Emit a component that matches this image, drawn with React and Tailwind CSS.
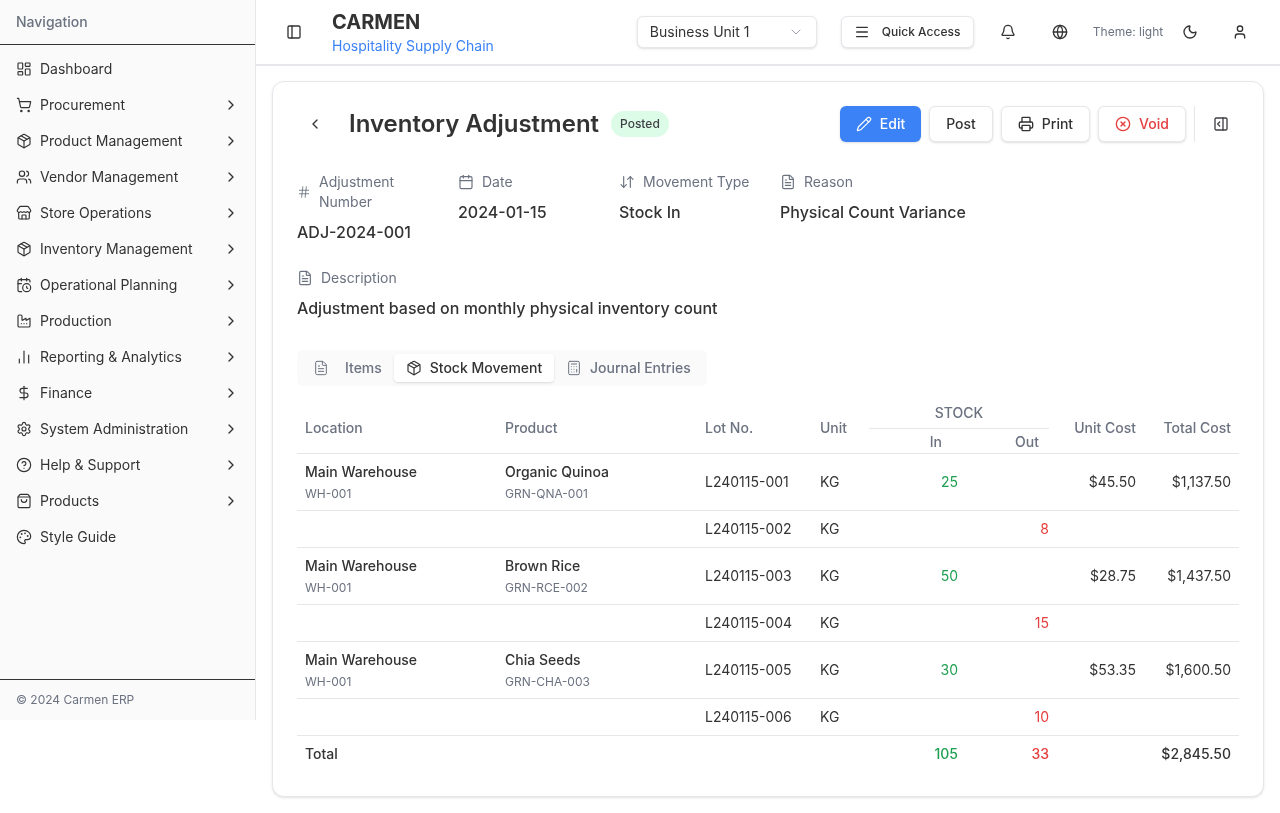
import React from "react";
import {
  LayoutDashboard, ShoppingCart, Package, Users, Store, CalendarClock, Factory, ChartNoAxesColumn, DollarSign, Settings,
  HelpCircle, ShoppingBag, Palette, ChevronRight, ChevronDown, ChevronLeft, PanelLeft, PanelRightOpen, Menu, Bell, Globe, Moon, User,
  Pencil, Printer, XCircle, Hash, Calendar, ArrowDownUp, FileText, Calculator,
} from "lucide-react";

const navItems = [
  { label: "Dashboard", icon: LayoutDashboard },
  { label: "Procurement", icon: ShoppingCart, sub: true },
  { label: "Product Management", icon: Package, sub: true },
  { label: "Vendor Management", icon: Users, sub: true },
  { label: "Store Operations", icon: Store, sub: true },
  { label: "Inventory Management", icon: Package, sub: true },
  { label: "Operational Planning", icon: CalendarClock, sub: true },
  { label: "Production", icon: Factory, sub: true },
  { label: "Reporting & Analytics", icon: ChartNoAxesColumn, sub: true },
  { label: "Finance", icon: DollarSign, sub: true },
  { label: "System Administration", icon: Settings, sub: true },
  { label: "Help & Support", icon: HelpCircle, sub: true },
  { label: "Products", icon: ShoppingBag, sub: true },
  { label: "Style Guide", icon: Palette },
];

const rows = [
  { loc: "Main Warehouse", code: "WH-001", product: "Organic Quinoa", sku: "GRN-QNA-001", lot: "L240115-001", stockIn: 25, unitCost: "$45.50", total: "$1,137.50" },
  { lot: "L240115-002", stockOut: 8 },
  { loc: "Main Warehouse", code: "WH-001", product: "Brown Rice", sku: "GRN-RCE-002", lot: "L240115-003", stockIn: 50, unitCost: "$28.75", total: "$1,437.50" },
  { lot: "L240115-004", stockOut: 15 },
  { loc: "Main Warehouse", code: "WH-001", product: "Chia Seeds", sku: "GRN-CHA-003", lot: "L240115-005", stockIn: 30, unitCost: "$53.35", total: "$1,600.50" },
  { lot: "L240115-006", stockOut: 10 },
];

function Sidebar() {
  return (
    <aside className="w-[256px] h-[720px] shrink-0 bg-[#fafafa] border-r border-[#e5e7eb] flex flex-col">
      <div className="h-[45px] px-4 flex items-center border-b border-[#333333] text-sm font-medium text-[#6b7280]">Navigation</div>
      <nav className="flex-1 px-2 pt-[6px]">
        {navItems.map((item) => (
          <div key={item.label} className="h-9 pl-2 pr-2 flex items-center gap-2 text-sm text-[#333333]">
            <item.icon className="w-4 h-4 shrink-0" strokeWidth={1.75} />
            <span className="flex-1">{item.label}</span>
            {item.sub && <ChevronRight className="w-4 h-4" strokeWidth={2} />}
          </div>
        ))}
      </nav>
      <div className="h-[41px] px-4 flex items-center border-t border-[#333333] text-xs text-[#6b7280]">© 2024 Carmen ERP</div>
    </aside>
  );
}

function Header() {
  return (
    <header className="h-[66px] bg-white border-b-2 border-[#e5e7eb] flex items-center pl-[30px] pr-[31px]">
      <PanelLeft className="w-4 h-4 text-[#333333]" strokeWidth={2} />
      <div className="ml-[30px] flex flex-col">
        <span className="text-xl leading-7 font-bold text-[#333333]">CARMEN</span>
        <span className="text-sm leading-5 text-[#3b82f6]">Hospitality Supply Chain</span>
      </div>
      <div className="ml-[143px] w-[180px] h-8 px-3 flex items-center justify-between bg-white border border-[#e5e7eb] rounded-md shadow-sm text-sm text-[#333333]">
        Business Unit 1
        <ChevronDown className="w-4 h-4 text-[#9ca3af]" strokeWidth={1.5} />
      </div>
      <div className="ml-6 w-[133px] h-8 pl-3 flex items-center gap-3 bg-white border border-[#e5e7eb] rounded-md shadow-sm text-xs font-medium text-[#333333]">
        <Menu className="w-4 h-4" strokeWidth={2} />
        Quick Access
      </div>
      <Bell className="ml-[26px] w-4 h-4 text-[#333333]" strokeWidth={2} />
      <Globe className="ml-[36px] w-4 h-4 text-[#333333]" strokeWidth={2} />
      <span className="ml-[25px] text-xs text-[#6b7280]">Theme: light</span>
      <Moon className="ml-[19px] w-4 h-4 text-[#333333]" strokeWidth={2} />
      <User className="ml-[34px] w-4 h-4 text-[#333333]" strokeWidth={2} />
    </header>
  );
}

function OutlineBtn({ children, className = "" }) {
  return (
    <button className={`h-9 flex items-center justify-center gap-2 bg-white border border-[#e5e7eb] rounded-md shadow-sm text-sm font-medium ${className}`}>
      {children}
    </button>
  );
}

function Field({ icon: Icon, label, value, className = "" }) {
  return (
    <div className={className}>
      <div className="flex items-center gap-2 text-sm leading-5 text-[#6b7280]">
        <Icon className="w-4 h-4 shrink-0" strokeWidth={1.75} />
        <span>{label}</span>
      </div>
      <div className="mt-[10px] text-base leading-5 font-medium text-[#333333]">{value}</div>
    </div>
  );
}

function StockTable() {
  return (
    <table className="mt-[15px] w-[942px] table-fixed border-collapse text-sm text-[#333333]">
      <colgroup>
        <col className="w-[200px]" />
        <col className="w-[200px]" />
        <col className="w-[115px]" />
        <col className="w-[57px]" />
        <col className="w-[90px]" />
        <col className="w-[90px]" />
        <col className="w-[95px]" />
        <col className="w-[95px]" />
      </colgroup>
      <thead className="text-[#6b7280] font-medium">
        <tr className="h-[27px]">
          <th rowSpan={2} className="px-2 pt-[2px] text-left font-medium">Location</th>
          <th rowSpan={2} className="px-2 pt-[2px] text-left font-medium">Product</th>
          <th rowSpan={2} className="px-2 pt-[2px] text-left font-medium">Lot No.</th>
          <th rowSpan={2} className="px-2 pt-[2px] text-left font-medium">Unit</th>
          <th colSpan={2} className="pb-[2px] border-b border-[#e5e7eb] font-medium text-center">STOCK</th>
          <th rowSpan={2} className="px-2 pt-[2px] text-right font-medium">Unit Cost</th>
          <th rowSpan={2} className="px-2 pt-[2px] text-right font-medium">Total Cost</th>
        </tr>
        <tr className="h-[25px] border-b border-[#e5e7eb]">
          <th className="pt-[3px] pr-[17px] text-right font-medium">In</th>
          <th className="pt-[3px] pr-[10px] text-right font-medium">Out</th>
        </tr>
      </thead>
      <tbody>
        {rows.map((r) => (
          <tr key={r.lot} className={`border-b border-[#e5e7eb] ${r.loc ? "h-[57px]" : "h-[37px]"}`}>
            <td className="px-2">
              {r.loc && (
                <>
                  <div className="font-medium leading-5">{r.loc}</div>
                  <div className="mt-1 text-xs leading-4 text-[#6b7280]">{r.code}</div>
                </>
              )}
            </td>
            <td className="px-2">
              {r.product && (
                <>
                  <div className="font-medium leading-5">{r.product}</div>
                  <div className="mt-1 text-xs leading-4 text-[#6b7280]">{r.sku}</div>
                </>
              )}
            </td>
            <td className="px-2">{r.lot}</td>
            <td className="px-2">KG</td>
            <td className="pr-px text-right text-[#1fa052]">{r.stockIn}</td>
            <td className="text-right text-[#e53e3e]">{r.stockOut}</td>
            <td className="px-2 text-right">{r.unitCost}</td>
            <td className="px-2 text-right">{r.total}</td>
          </tr>
        ))}
        <tr className="h-[37px] font-medium">
          <td className="px-2" colSpan={4}>Total</td>
          <td className="pr-px text-right text-[#1fa052]">105</td>
          <td className="text-right text-[#e53e3e]">33</td>
          <td></td>
          <td className="px-2 text-right">$2,845.50</td>
        </tr>
      </tbody>
    </table>
  );
}

export default function App() {
  return (
    <div className="flex min-h-[813px] antialiased will-change-transform" style={{ fontFamily: "Inter, sans-serif" }}>
      <Sidebar />
      <div className="flex-1 min-w-0">
        <Header />
        <main className="px-4 pt-[15px] pb-4">
          <section className="h-[716px] bg-white border border-[#e5e7eb] rounded-xl shadow-sm pl-6 pr-6 pt-6">
            <div className="flex items-center h-9">
              <ChevronLeft className="ml-[10px] w-4 h-4 text-[#333333]" strokeWidth={2} />
              <h1 className="ml-[26px] text-2xl font-semibold text-[#333333]">Inventory Adjustment</h1>
              <span className="ml-3 h-[26px] px-[9px] flex items-center rounded-full bg-[#dcfce7] text-xs font-medium text-[#3f3f46]">Posted</span>
              <div className="ml-auto flex items-center gap-2">
                <button className="w-[81px] h-9 flex items-center justify-center gap-2 rounded-md bg-[#3b82f6] text-sm font-medium text-white shadow-sm">
                  <Pencil className="w-4 h-4" strokeWidth={1.75} />
                  Edit
                </button>
                <OutlineBtn className="w-16 text-[#333333]">Post</OutlineBtn>
                <OutlineBtn className="w-[89px] text-[#333333]"><Printer className="w-4 h-4" strokeWidth={2} />Print</OutlineBtn>
                <OutlineBtn className="w-[88px] text-[#e53e3e]"><XCircle className="w-4 h-4" strokeWidth={2} />Void</OutlineBtn>
                <div className="w-px h-9 bg-[#e5e7eb]"></div>
                <PanelRightOpen className="ml-[10px] mr-[10px] w-4 h-4 text-[#3f3f46]" strokeWidth={2} />
              </div>
            </div>

            <div className="mt-[30px] flex">
              <div className="w-[161px] pr-4">
                <div className="flex items-center gap-2 text-sm leading-5 text-[#6b7280]">
                  <Hash className="w-3.5 h-3.5 shrink-0" strokeWidth={1.5} />
                  <span className="w-[90px]">Adjustment Number</span>
                </div>
                <div className="mt-[10px] text-base leading-5 font-medium text-[#333333]">ADJ-2024-001</div>
              </div>
              <Field icon={Calendar} label="Date" value="2024-01-15" className="w-[161px]" />
              <Field icon={ArrowDownUp} label="Movement Type" value="Stock In" className="w-[161px]" />
              <Field icon={FileText} label="Reason" value="Physical Count Variance" />
            </div>

            <Field icon={FileText} label="Description" value="Adjustment based on monthly physical inventory count" className="mt-[26px]" />

            <div className="mt-[32px] w-[410px] h-9 px-1 flex items-center rounded-md bg-[#fafafa] text-sm font-medium text-[#6b7280]">
              <div className="w-[93px] h-7 pl-3 flex items-center gap-4">
                <FileText className="w-4 h-4" strokeWidth={1.5} />Items
              </div>
              <div className="w-[160px] h-7 flex items-center justify-center gap-2 rounded bg-white shadow-sm text-[#333333]">
                <Package className="w-4 h-4" strokeWidth={1.75} />Stock Movement
              </div>
              <div className="h-7 pl-3 flex items-center gap-2">
                <Calculator className="w-4 h-4" strokeWidth={1.5} />Journal Entries
              </div>
            </div>

            <StockTable />
          </section>
        </main>
      </div>
    </div>
  );
}
